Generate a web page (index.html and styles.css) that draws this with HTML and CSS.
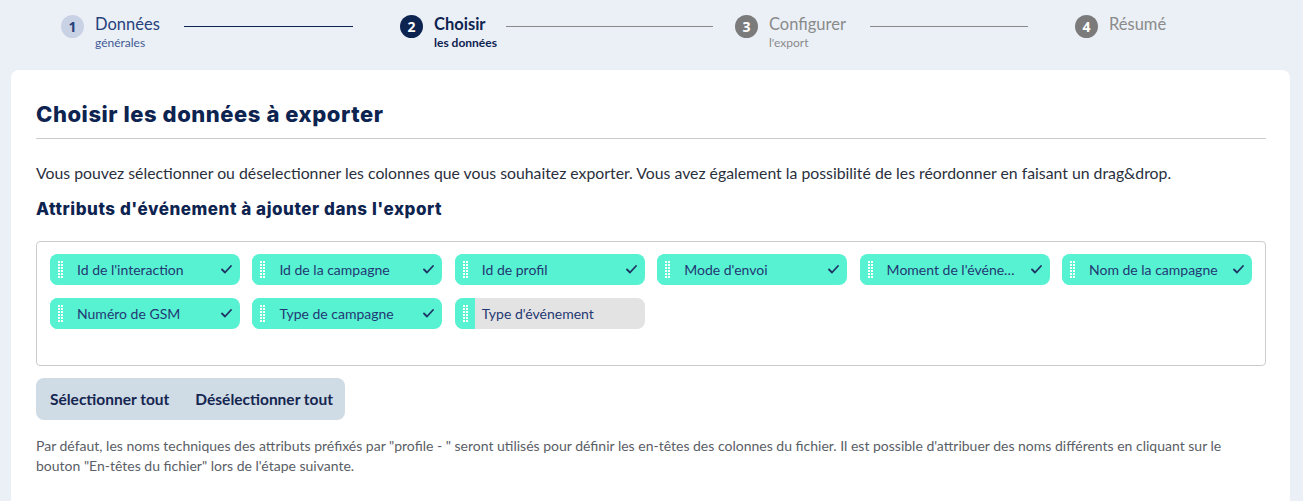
FILE: index.html
```html
<!DOCTYPE html>
<html lang="fr">
<head>
<meta charset="utf-8">
<link rel="stylesheet" href="styles.css">
</head>
<body>
<div class="stepper">
  <div class="step done">
    <span class="num">1</span>
    <div class="label"><div class="t">Données</div><div class="s">générales</div></div>
    <span class="line line-a"></span>
  </div>
  <div class="step active">
    <span class="num">2</span>
    <div class="label"><div class="t">Choisir</div><div class="s">les données</div></div>
    <span class="line line-b"></span>
  </div>
  <div class="step todo">
    <span class="num">3</span>
    <div class="label"><div class="t">Configurer</div><div class="s">l'export</div></div>
    <span class="line line-a"></span>
  </div>
  <div class="step todo">
    <span class="num">4</span>
    <div class="label"><div class="t">Résumé</div></div>
  </div>
</div>

<div class="card">
  <h1 class="title">Choisir les données à exporter</h1>
  <p class="intro">Vous pouvez sélectionner ou déselectionner les colonnes que vous souhaitez exporter. Vous avez également la possibilité de les réordonner en faisant un drag&amp;drop.</p>
  <h2 class="subtitle">Attributs d'événement à ajouter dans l'export</h2>

  <div class="chips">
    <div class="chip on"><span class="handle"><svg width="5" height="18" viewBox="0 0 5 18"><g fill="#fff"><rect x="0" y="0" width="2" height="2"/><rect x="3" y="0" width="2" height="2"/><rect x="0" y="3" width="2" height="2"/><rect x="3" y="3" width="2" height="2"/><rect x="0" y="6" width="2" height="2"/><rect x="3" y="6" width="2" height="2"/><rect x="0" y="9" width="2" height="2"/><rect x="3" y="9" width="2" height="2"/><rect x="0" y="12" width="2" height="2"/><rect x="3" y="12" width="2" height="2"/><rect x="0" y="15" width="2" height="2"/><rect x="3" y="15" width="2" height="2"/></g></svg></span><span class="name">Id de l'interaction</span><svg class="check" width="11" height="9" viewBox="0 0 11 9"><polyline points="1,4.5 4,7.5 10,1" fill="none" stroke="#1f3464" stroke-width="1.8" stroke-linecap="round" stroke-linejoin="round"/></svg></div>
    <div class="chip on"><span class="handle"><svg width="5" height="18" viewBox="0 0 5 18"><g fill="#fff"><rect x="0" y="0" width="2" height="2"/><rect x="3" y="0" width="2" height="2"/><rect x="0" y="3" width="2" height="2"/><rect x="3" y="3" width="2" height="2"/><rect x="0" y="6" width="2" height="2"/><rect x="3" y="6" width="2" height="2"/><rect x="0" y="9" width="2" height="2"/><rect x="3" y="9" width="2" height="2"/><rect x="0" y="12" width="2" height="2"/><rect x="3" y="12" width="2" height="2"/><rect x="0" y="15" width="2" height="2"/><rect x="3" y="15" width="2" height="2"/></g></svg></span><span class="name">Id de la campagne</span><svg class="check" width="11" height="9" viewBox="0 0 11 9"><polyline points="1,4.5 4,7.5 10,1" fill="none" stroke="#1f3464" stroke-width="1.8" stroke-linecap="round" stroke-linejoin="round"/></svg></div>
    <div class="chip on"><span class="handle"><svg width="5" height="18" viewBox="0 0 5 18"><g fill="#fff"><rect x="0" y="0" width="2" height="2"/><rect x="3" y="0" width="2" height="2"/><rect x="0" y="3" width="2" height="2"/><rect x="3" y="3" width="2" height="2"/><rect x="0" y="6" width="2" height="2"/><rect x="3" y="6" width="2" height="2"/><rect x="0" y="9" width="2" height="2"/><rect x="3" y="9" width="2" height="2"/><rect x="0" y="12" width="2" height="2"/><rect x="3" y="12" width="2" height="2"/><rect x="0" y="15" width="2" height="2"/><rect x="3" y="15" width="2" height="2"/></g></svg></span><span class="name">Id de profil</span><svg class="check" width="11" height="9" viewBox="0 0 11 9"><polyline points="1,4.5 4,7.5 10,1" fill="none" stroke="#1f3464" stroke-width="1.8" stroke-linecap="round" stroke-linejoin="round"/></svg></div>
    <div class="chip on"><span class="handle"><svg width="5" height="18" viewBox="0 0 5 18"><g fill="#fff"><rect x="0" y="0" width="2" height="2"/><rect x="3" y="0" width="2" height="2"/><rect x="0" y="3" width="2" height="2"/><rect x="3" y="3" width="2" height="2"/><rect x="0" y="6" width="2" height="2"/><rect x="3" y="6" width="2" height="2"/><rect x="0" y="9" width="2" height="2"/><rect x="3" y="9" width="2" height="2"/><rect x="0" y="12" width="2" height="2"/><rect x="3" y="12" width="2" height="2"/><rect x="0" y="15" width="2" height="2"/><rect x="3" y="15" width="2" height="2"/></g></svg></span><span class="name">Mode d'envoi</span><svg class="check" width="11" height="9" viewBox="0 0 11 9"><polyline points="1,4.5 4,7.5 10,1" fill="none" stroke="#1f3464" stroke-width="1.8" stroke-linecap="round" stroke-linejoin="round"/></svg></div>
    <div class="chip on"><span class="handle"><svg width="5" height="18" viewBox="0 0 5 18"><g fill="#fff"><rect x="0" y="0" width="2" height="2"/><rect x="3" y="0" width="2" height="2"/><rect x="0" y="3" width="2" height="2"/><rect x="3" y="3" width="2" height="2"/><rect x="0" y="6" width="2" height="2"/><rect x="3" y="6" width="2" height="2"/><rect x="0" y="9" width="2" height="2"/><rect x="3" y="9" width="2" height="2"/><rect x="0" y="12" width="2" height="2"/><rect x="3" y="12" width="2" height="2"/><rect x="0" y="15" width="2" height="2"/><rect x="3" y="15" width="2" height="2"/></g></svg></span><span class="name">Moment de l'événement</span><svg class="check" width="11" height="9" viewBox="0 0 11 9"><polyline points="1,4.5 4,7.5 10,1" fill="none" stroke="#1f3464" stroke-width="1.8" stroke-linecap="round" stroke-linejoin="round"/></svg></div>
    <div class="chip on"><span class="handle"><svg width="5" height="18" viewBox="0 0 5 18"><g fill="#fff"><rect x="0" y="0" width="2" height="2"/><rect x="3" y="0" width="2" height="2"/><rect x="0" y="3" width="2" height="2"/><rect x="3" y="3" width="2" height="2"/><rect x="0" y="6" width="2" height="2"/><rect x="3" y="6" width="2" height="2"/><rect x="0" y="9" width="2" height="2"/><rect x="3" y="9" width="2" height="2"/><rect x="0" y="12" width="2" height="2"/><rect x="3" y="12" width="2" height="2"/><rect x="0" y="15" width="2" height="2"/><rect x="3" y="15" width="2" height="2"/></g></svg></span><span class="name">Nom de la campagne</span><svg class="check" width="11" height="9" viewBox="0 0 11 9"><polyline points="1,4.5 4,7.5 10,1" fill="none" stroke="#1f3464" stroke-width="1.8" stroke-linecap="round" stroke-linejoin="round"/></svg></div>
    <div class="chip on"><span class="handle"><svg width="5" height="18" viewBox="0 0 5 18"><g fill="#fff"><rect x="0" y="0" width="2" height="2"/><rect x="3" y="0" width="2" height="2"/><rect x="0" y="3" width="2" height="2"/><rect x="3" y="3" width="2" height="2"/><rect x="0" y="6" width="2" height="2"/><rect x="3" y="6" width="2" height="2"/><rect x="0" y="9" width="2" height="2"/><rect x="3" y="9" width="2" height="2"/><rect x="0" y="12" width="2" height="2"/><rect x="3" y="12" width="2" height="2"/><rect x="0" y="15" width="2" height="2"/><rect x="3" y="15" width="2" height="2"/></g></svg></span><span class="name">Numéro de GSM</span><svg class="check" width="11" height="9" viewBox="0 0 11 9"><polyline points="1,4.5 4,7.5 10,1" fill="none" stroke="#1f3464" stroke-width="1.8" stroke-linecap="round" stroke-linejoin="round"/></svg></div>
    <div class="chip on"><span class="handle"><svg width="5" height="18" viewBox="0 0 5 18"><g fill="#fff"><rect x="0" y="0" width="2" height="2"/><rect x="3" y="0" width="2" height="2"/><rect x="0" y="3" width="2" height="2"/><rect x="3" y="3" width="2" height="2"/><rect x="0" y="6" width="2" height="2"/><rect x="3" y="6" width="2" height="2"/><rect x="0" y="9" width="2" height="2"/><rect x="3" y="9" width="2" height="2"/><rect x="0" y="12" width="2" height="2"/><rect x="3" y="12" width="2" height="2"/><rect x="0" y="15" width="2" height="2"/><rect x="3" y="15" width="2" height="2"/></g></svg></span><span class="name">Type de campagne</span><svg class="check" width="11" height="9" viewBox="0 0 11 9"><polyline points="1,4.5 4,7.5 10,1" fill="none" stroke="#1f3464" stroke-width="1.8" stroke-linecap="round" stroke-linejoin="round"/></svg></div>
    <div class="chip off"><span class="handle"><svg width="5" height="18" viewBox="0 0 5 18"><g fill="#fff"><rect x="0" y="0" width="2" height="2"/><rect x="3" y="0" width="2" height="2"/><rect x="0" y="3" width="2" height="2"/><rect x="3" y="3" width="2" height="2"/><rect x="0" y="6" width="2" height="2"/><rect x="3" y="6" width="2" height="2"/><rect x="0" y="9" width="2" height="2"/><rect x="3" y="9" width="2" height="2"/><rect x="0" y="12" width="2" height="2"/><rect x="3" y="12" width="2" height="2"/><rect x="0" y="15" width="2" height="2"/><rect x="3" y="15" width="2" height="2"/></g></svg></span><span class="name">Type d'événement</span></div>
  </div>

  <div class="btn-group">
    <button class="btn">Sélectionner tout</button>
    <button class="btn">Désélectionner tout</button>
  </div>

  <p class="note">Par défaut, les noms techniques des attributs préfixés par "profile - " seront utilisés pour définir les en-têtes des colonnes du fichier. Il est possible d'attribuer des noms différents en cliquant sur le bouton "En-têtes du fichier" lors de l'étape suivante.</p>
</div>
</body>
</html>
```

FILE: styles.css
```css
* { box-sizing: border-box; }
html, body { margin: 0; padding: 0; }
body {
  background: #ebf0f7;
  font-family: "Lato", "Noto Sans", sans-serif;
  color: #0d2350;
  overflow: hidden;
  height: 501px;
}

.stepper {
  display: grid;
  grid-template-columns: 339px 335px 340px auto;
  padding: 14px 0 0 61px;
  height: 70px;
}
.step {
  display: flex;
  align-items: flex-start;
}
.num {
  flex: none;
  width: 23px;
  height: 23px;
  margin-top: 1px;
  border-radius: 50%;
  display: flex;
  align-items: center;
  justify-content: center;
  font-size: 14px;
  font-weight: 700;
  font-family: "Open Sans", sans-serif;
}
.label { margin-left: 11px; white-space: nowrap; }
.label .t { font-size: 16.5px; line-height: 21px; }
.label .s { font-size: 12px; line-height: 15px; }
.line {
  flex: 1;
  height: 1px;
  margin-top: 12px;
}
.line-a { margin-left: 24px; margin-right: 47px; }
.line-b { margin-left: 9px; margin-right: 22px; }

.step.done .num { background: #c9d2e5; color: #26407a; }
.step.done .t { color: #26407a; }
.step.done .s { color: #3e5a94; }
.step.done .line { background: #0d2350; }
.step.active .num { background: #0d2350; color: #fff; }
.step.active .t { color: #0d2350; font-weight: 700; }
.step.active .s { color: #0d2350; font-weight: 700; }
.step.active .line { background: #8a8a8a; }
.step.todo .num { background: #7b7b7b; color: #fff; }
.step.todo .t { color: #8a8a8a; }
.step.todo .s { color: #8a8a8a; }
.step.todo .line { background: #8a8a8a; }

.card {
  background: #fff;
  margin: 0 13px 0 11px;
  border-radius: 8px;
  padding: 29px 24px 40px 25px;
  min-height: 450px;
}
.title {
  margin: 0;
  font-family: "Inter", sans-serif;
  font-weight: 800;
  font-size: 22px;
  letter-spacing: 0.55px;
  line-height: 30px;
  color: #0d2350;
  padding-bottom: 9px;
  border-bottom: 1px solid #cccccc;
}
.intro {
  margin: 24px 0 0;
  font-size: 15.8px;
  line-height: 20px;
  color: #2a2f3d;
}
.subtitle {
  margin: 14px 0 0;
  font-family: "Inter", sans-serif;
  font-weight: 800;
  font-size: 17px;
  letter-spacing: 0.55px;
  line-height: 24px;
  color: #0d2350;
}
.chips {
  margin-top: 20px;
  border: 1px solid #cccccc;
  border-radius: 4px;
  padding: 12px 13px 36px 13px;
  display: grid;
  grid-template-columns: repeat(6, 1fr);
  column-gap: 12.4px;
  row-gap: 13px;
}
.chip {
  height: 31px;
  border-radius: 8px;
  display: flex;
  align-items: center;
  overflow: hidden;
  background: #56f2d2;
  font-size: 14px;
  color: #233872;
}
.chip.off { background: #e3e3e3; }
.handle {
  flex: none;
  width: 20px;
  height: 100%;
  background: #56f2d2;
  display: flex;
  align-items: center;
  justify-content: center;
}
.handle svg { display: block; margin-left: 1px; }
.name {
  flex: 1;
  min-width: 0;
  padding-left: 7px;
  white-space: nowrap;
  overflow: hidden;
  text-overflow: ellipsis;
}
.check { flex: none; margin: 0 8px 0 8px; display: block; }

.btn-group {
  margin-top: 12px;
  display: inline-flex;
  background: #cfdbe5;
  border-radius: 8px;
  height: 42px;
  align-items: center;
  padding: 0 12px 0 14px;
  gap: 26px;
}
.btn {
  border: 0;
  background: none;
  padding: 0;
  font-family: "Lato", sans-serif;
  font-weight: 700;
  font-size: 15.5px;
  color: #152650;
  cursor: pointer;
}
.note {
  margin: 16px 0 0;
  font-size: 14px;
  line-height: 20px;
  color: #5a5e66;
}
```
